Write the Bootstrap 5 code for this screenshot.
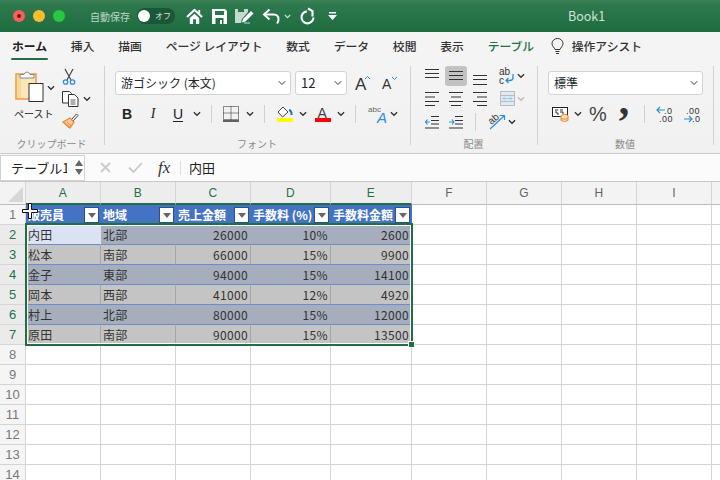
<!DOCTYPE html>
<html lang="ja">
<head>
<meta charset="utf-8">
<title>Book1</title>
<link href="https://cdn.jsdelivr.net/npm/bootstrap@5.3.0/dist/css/bootstrap.min.css" rel="stylesheet">
<style>
html,body{margin:0;height:480px;overflow:hidden;background:#fff}
body,select{font-family:"Noto Sans CJK JP","Liberation Sans",sans-serif;color:#222}
svg{display:block;flex:none;overflow:visible}
.ttl{height:32px;background:linear-gradient(#3d8259,#2e7a4e 12%,#1f6c41);color:#fff}
.dot{width:12px;height:12px;border-radius:50%;margin-right:8px}
.dot-r{margin-left:13px;background:#fc5f57}
.dot-r::after{content:"";display:block;width:4px;height:4px;margin:4px;border-radius:50%;background:#7a1410}
.dot-y{background:#fdbc2e}
.dot-g{background:#28c840;margin-right:25px}
.auto{font-size:10px;color:#bcd8c7;width:47px}
.tog{width:38px;height:16px;border-radius:8px;background:#1c5537;padding-left:1px;margin-right:11px}
.tog i{display:block;width:12px;height:12px;border-radius:50%;background:#fff}
.tog span{font-size:8px;color:#d5e5db;margin-left:5px;line-height:1}
.i-save{margin:0 8px 0 9px}.i-edit{margin-right:8px}.i-chv{margin:0 8px 0 3px}.i-redo{margin-right:12px}
.book{margin-left:231px;font-size:12.500px;color:#cfe2d7}
.tabs{height:28px;background:#f4f4f4;gap:23.800px;padding-left:12px;font-size:11.800px;font-weight:500;color:#333}
.tabs>span{line-height:28px;height:28px;position:relative;white-space:nowrap}
.tab-on{font-weight:700;color:#222}
.tab-on::after{content:"";position:absolute;left:-1px;right:-1px;bottom:0;height:2px;background:#1f6f43;border-radius:1px}
.tab-t{color:#217346}
.bulb{margin:0 -16px 0 -7px}
.rib{height:94px;background:linear-gradient(#f4f4f4,#f1f1f1);border-bottom:1px solid #c9c9c9;padding-top:6px;align-items:flex-start}
.grp{height:79px;border-right:1px solid #d2d2d2;padding-top:5px}
.g1{width:105px}.g2{width:306px;padding-left:10px}.g3{width:127px}.g4{width:176px;padding-left:10px}
.glab{margin-top:auto;margin-bottom:-5px;margin-left:-1px;text-align:center;font-size:10px;line-height:12px;color:#8a8a8a}
.g2 .glab{margin-left:-11px}.g4 .glab{margin-left:-11px}
.paste{margin-left:14px;width:46px}
.paste-lab{font-size:10px;line-height:14px;margin-top:5px;white-space:nowrap}
.chv-up{margin:14px 0 0 3px}
.clip-r{margin:-2px 0 0 2px;gap:6px}
.sel-f{height:24px;padding:0 18px 0 5px;font-size:12px;border:1px solid #d3d3d3;border-radius:3px;background-position:right 4px center;background-size:8px 8px;line-height:22px;box-shadow:none}
.sf1{width:176px;margin-right:4px}.sf2{width:52px;margin-right:8px;font-size:13px}.sf4{width:155px}
.bigA{width:15px;margin-right:12px}
.r2{display:grid;align-items:center;justify-items:center;height:24px;margin-top:7px}
.r2f{grid-template-columns:24px 28px 22px 16px 12px 28px 10px 18px 24px 12px 28px 8px 20px 26px 6px}
.r2n{grid-template-columns:24px 12px 28px 24px 16px 24px 30px}
.vs{width:1px;height:18px;background:#cfcfcf}
.bb{font:700 14px "Liberation Sans",sans-serif}
.bi{font:italic 14px "Liberation Serif",serif}
.bu{font:14px "Liberation Sans",sans-serif;text-decoration:underline;text-underline-offset:2px}
.pct{font:20px "Liberation Sans",sans-serif;color:#444;line-height:24px}
.cma{font:700 42px/24px "Liberation Serif",serif;color:#333;height:24px;margin-top:-28px}
.g3{padding-top:0}
.ar{display:grid;align-items:center;justify-items:center;height:23px;margin-top:-2px}
.ar+.ar{margin-top:0}
.ar1,.ar2{grid-template-columns:16px 32px 16px 10px 18px 10px;margin-left:13px}
.ar3{grid-template-columns:16px 32px 6px 9px 19px 12px;margin-left:13px;margin-top:0}
.ar-on{width:22px;height:20px;background:#c2c2c2;border-radius:3px}
.ar-on svg{margin:0 auto}
.blank{width:1px;height:1px}
.fbar{height:28px;background:#fbfbfb;border-bottom:1px solid #c8c8c8}
.nbox{width:85px;height:26px;background:#fff;border:1px solid #d2d2d2;font-size:13px;padding-left:10px;line-height:24px;margin-right:15px}
.nbox span{width:56px;overflow:hidden;white-space:nowrap}
.nbox svg{margin-left:8px}
.fx{font:italic 17px "Liberation Serif",serif;color:#333;width:18px;margin-left:15px;line-height:1}
.fx-sep{width:1px;height:14px;background:#ddd;margin:0 8px 0 4px}
.fval{font-size:13px}
.f-x{margin-right:17px}
.sheet{height:298px;overflow:hidden;background:#fff}
.xl{table-layout:fixed;width:720px;border-collapse:separate;border-spacing:0;font-size:12px;line-height:19px;letter-spacing:.35px;color:#333}
.xl td,.xl th{padding:0 2px;border-right:1px solid #d5d5d5;border-bottom:1px solid #d5d5d5;white-space:nowrap;overflow:hidden;font-weight:400;height:20px}
.c0{width:26px}.cw{width:75px}.cd{width:80px}.ce{width:81px}.cz{width:9px}
.xl thead th{height:23px;background:#f3f3f3;text-align:center;font:12px "Liberation Sans",sans-serif;color:#666;border-color:#d5d5d5;border-bottom-color:#bdbdbd}
.xl thead th.on{background:#ededed;color:#217346;border-bottom:2px solid #1f6f43}
.xl thead th.corner{position:relative;padding:0}
.tri{position:absolute;right:2px;bottom:2px;width:0;height:0;border-style:solid;border-width:0 0 15px 15px;border-color:transparent transparent #d6d6d6 transparent}
.xl tbody th{background:#f5f5f5;text-align:center;padding:0;font:13px "Liberation Sans",sans-serif;color:#777;letter-spacing:0}
.xl tbody th.on{background:#ebebeb;color:#217346}
.xl td.hc{background:#4472c4;color:#fff;font-weight:700;border-right-color:#4472c4;border-bottom-color:#fff;padding:0 1px 0 2px;letter-spacing:0}
.hc>div{height:19px}
.fl{width:15px;height:16px;background:#fff;border:1px solid #2f4f86;flex:none;margin-left:auto}
.fl::after{content:"";display:block;width:0;height:0;margin:5px auto 0;border-style:solid;border-width:5px 4px 0 4px;border-color:#666 transparent transparent transparent}
.b1 td.d{background:#a6adbd;border-right-color:#a6adbd;border-bottom-color:#6d8cc8}
.b2 td.d{background:#c4c4c4;border-right-color:#a5a5a5;border-bottom-color:#6d8cc8}
.b1 td.act{background:#dbe3f3;border-right-color:#dbe3f3}
.xl td.num{text-align:right}
.sel-box{position:absolute;left:25px;top:41px;width:388px;height:123px;border:2px solid #1f6f43;box-shadow:inset 0 0 0 1px #fff;pointer-events:none}
.sel-h{position:absolute;left:408px;top:159px;width:7px;height:7px;background:#1f6f43;border:1px solid #fff}
.crs{position:absolute;left:22px;top:21px}
</style>
</head>
<body>
<svg width="0" height="0" class="position-absolute">
<symbol id="chev" viewBox="0 0 9 6"><path d="M1 1l3.500 3.500L8 1" fill="none" stroke="#333" stroke-width="1.500"/></symbol>
<symbol id="chevp" viewBox="0 0 9 6"><path d="M1 1l3.500 3.500L8 1" fill="none" stroke="#bbb" stroke-width="1.500"/></symbol>
<symbol id="chevw" viewBox="0 0 9 6"><path d="M1 1l3.500 3.500L8 1" fill="none" stroke="#d5e5db" stroke-width="1.500"/></symbol>
</svg>

<div class="ttl d-flex align-items-center">
  <div class="dot dot-r"></div><div class="dot dot-y"></div><div class="dot dot-g"></div>
  <div class="auto text-nowrap">自動保存</div>
  <div class="tog d-flex align-items-center"><i></i><span>オフ</span></div>
  <svg width="17" height="17" viewBox="0 0 18 18" fill="#fff"><path d="M1 9.500L9 2l8 7.500" fill="none" stroke="#fff" stroke-width="2.200"/><path d="M4 10.500L9 6l5 4.500V17h-3.500v-5h-3v5H4z"/><path d="M13 2h2v4h-2z"/></svg>
  <svg class="i-save" width="15" height="15" viewBox="0 0 15 15"><path fill="#fff" fill-rule="evenodd" d="M0 0h13l2 2v13H0zM3 2v4h9V2zM3.500 9v6h8V9z"/><path fill="#fff" d="M8 11h2v4H8z"/></svg>
  <svg class="i-edit" width="19" height="16" viewBox="0 0 19 16"><path fill="#c3dacc" d="M0 1h13v3L7 11l-1 4H0z"/><path fill="#2a7549" d="M3 1h6v3H3z"/><path fill="#fff" d="M8 11l8-8 2.500 2.500-8 8-3.500 1z"/><path fill="#fff" stroke="#c3dacc" d="M9 15h6"/></svg>
  <svg width="19" height="17" viewBox="0 0 19 17" fill="none" stroke="#fff" stroke-width="2"><path d="M7.500 1.500L2 6.500l5.500 5"/><path d="M2 6.500h10a4.500 4.500 0 0 1 4.500 4.500v.5q0 2-1.500 4"/></svg>
  <svg class="i-chv" width="7" height="5"><use href="#chevw" width="7" height="5"/></svg>
  <svg class="i-redo" width="17" height="17" viewBox="0 0 17 17" fill="none" stroke="#fff" stroke-width="2.100"><path d="M7.800 3.400A6 6 0 1 0 14.500 9.500"/><path d="M9 .5l4.500 2.500v5.500"/></svg>
  <svg width="9" height="8" viewBox="0 0 9 8" fill="#fff"><path d="M1 0h7v1.500H1zM0 3h9L4.500 8z"/></svg>
  <div class="book">Book1</div>
</div>

<div class="tabs d-flex">
  <span class="tab-on">ホーム</span><span>挿入</span><span>描画</span><span>ページ レイアウト</span><span>数式</span><span>データ</span><span>校閲</span><span>表示</span><span class="tab-t">テーブル</span>
  <svg class="bulb align-self-center" width="13" height="17" viewBox="0 0 13 17" fill="none" stroke="#333"><path d="M4 11.500C3.500 9.500 1 8.500 1 5.500a5.500 5 0 0 1 11 0c0 3-2.500 4-3 6z"/><path d="M4.500 13.500h4M5 15.500h3"/></svg>
  <span>操作アシスト</span>
</div>

<div class="rib d-flex">
  <div class="grp g1 d-flex flex-column">
    <div class="d-flex">
      <div class="paste">
        <div class="d-flex">
          <svg width="30" height="31" viewBox="0 0 30 31"><rect x="2" y="3" width="20" height="25" fill="#fbe6b8" stroke="#e8953c" stroke-width="1.400"/><path d="M3 4h4v23H3z" fill="#f9d998"/><path d="M6 7V3.500h4Q11 1 13 1t3 2.500h4V7z" fill="#fff" stroke="#888"/><rect x="15" y="12.500" width="14" height="18" fill="#fff" stroke="#333"/></svg>
          <svg class="chv-up" width="8" height="6"><use href="#chev" width="8" height="6"/></svg>
        </div>
        <div class="paste-lab">ペースト</div>
      </div>
      <div class="clip-r d-flex flex-column">
        <svg width="14" height="16" viewBox="0 0 14 16" fill="none"><path d="M3 0l6 11M11 0L5 11" stroke="#444" stroke-width="1.200"/><circle cx="3.500" cy="13" r="2.200" stroke="#2d8fd8" stroke-width="1.300"/><circle cx="10.500" cy="13" r="2.200" stroke="#2d8fd8" stroke-width="1.300"/></svg>
        <div class="d-flex align-items-center">
          <svg width="17" height="16" viewBox="0 0 17 16" fill="#fff" stroke="#333"><path d="M.5 .5h7l2 2V12H.5z"/><path d="M6.500 3.500h6l3.500 3.500v8.500H6.500z"/><path d="M8.500 9h5M8.500 11h5M8.500 13h5" stroke-width=".8"/></svg>
          <svg class="ms-1" width="8" height="6"><use href="#chev" width="8" height="6"/></svg>
        </div>
        <svg width="17" height="16" viewBox="0 0 17 16"><path d="M9.500 6.500L14.500 1 16 2.500 11 8z" fill="#fff" stroke="#444"/><path d="M1 9l7-4 4 4-4 6z" fill="#f9c89a" stroke="#ea8a35" stroke-width="1.300"/><path d="M3 11l4 4M5 9l4 4" stroke="#ea8a35"/></svg>
      </div>
    </div>
    <div class="glab">クリップボード</div>
  </div>

  <div class="grp g2 d-flex flex-column">
    <div class="d-flex align-items-center">
      <select class="form-select sel-f sf1"><option>游ゴシック (本文)</option></select>
      <select class="form-select sel-f sf2"><option>12</option></select>
      <svg class="bigA" width="15" height="17" viewBox="0 0 15 17"><text x="0" y="15" font-family="Liberation Sans" font-size="17" fill="#333">A</text><path d="M10 4l2.500-2.500L15 4" fill="none" stroke="#2d8fd8"/></svg>
      <svg width="16" height="14" viewBox="0 0 16 14"><text x="0" y="13" font-family="Liberation Sans" font-size="14" fill="#333">A</text><path d="M10 1l2.500 2.500L15 1" fill="none" stroke="#2d8fd8"/></svg>
    </div>
    <div class="r2 r2f">
      <span class="bb">B</span><span class="bi">I</span><span class="bu">U</span>
      <svg width="8" height="6"><use href="#chev" width="8" height="6"/></svg>
      <div class="vs"></div>
      <svg width="16" height="16" viewBox="0 0 16 16"><path d="M.5 .5h15v13H.5zM8 .5v13M.5 7h15" fill="none" stroke="#222" stroke-dasharray="1 1"/><path d="M0 15h16" stroke="#111" stroke-width="1.300"/></svg>
      <svg width="8" height="6"><use href="#chev" width="8" height="6"/></svg>
      <div class="vs"></div>
      <svg width="16" height="16" viewBox="0 0 16 16"><path d="M6 1L1 6l4.500 5L11 6z" fill="#fff" stroke="#444"/><path d="M12 4q3 1 2.500 5" fill="none" stroke="#1e6fc4" stroke-width="2"/><path d="M0 12h16v4H0z" fill="#ff0"/></svg>
      <svg width="8" height="6"><use href="#chev" width="8" height="6"/></svg>
      <svg width="16" height="16" viewBox="0 0 16 16"><text x="2.500" y="11.500" font-family="Liberation Sans" font-size="14" fill="#444">A</text><path d="M0 12h16v4H0z" fill="#f00"/></svg>
      <svg width="8" height="6"><use href="#chev" width="8" height="6"/></svg>
      <div class="vs"></div>
      <svg width="21" height="19" viewBox="0 0 21 19"><text x="0" y="7" font-family="Liberation Sans" font-size="8" fill="#666">abc</text><text x="9" y="18" font-family="Liberation Sans" font-style="italic" font-size="15" fill="#2d8fd8">A</text></svg>
      <svg width="8" height="6"><use href="#chev" width="8" height="6"/></svg>
    </div>
    <div class="glab">フォント</div>
  </div>

  <div class="grp g3 d-flex flex-column">
    <div class="ar ar1">
      <svg width="14" height="20" viewBox="0 0 14 20" stroke="#333"><path d="M0 3.500h14M0 7.500h14M0 11.500h14"/></svg>
      <div class="ar-on"><svg width="14" height="20" viewBox="0 0 14 20" stroke="#333"><path d="M0 5.500h14M0 9.500h14M0 13.500h14"/></svg></div>
      <svg width="14" height="20" viewBox="0 0 14 20" stroke="#333"><path d="M0 9.500h14M0 13.500h14M0 18.500h14"/></svg>
      <span class="blank"></span>
      <svg width="18" height="18" viewBox="0 0 18 18"><text x="1" y="8" font-family="Liberation Sans" font-size="10" fill="#333">ab</text><text x="1" y="17" font-family="Liberation Sans" font-size="10" fill="#333">c</text><path d="M15 7v3.500a3 3 0 0 1-3 3H8M10.500 11L8 13.500l2.500 2.500" fill="none" stroke="#2d8fd8" stroke-width="1.300"/></svg>
      <svg width="8" height="6"><use href="#chev" width="8" height="6"/></svg>
    </div>
    <div class="ar ar2">
      <svg width="14" height="16" viewBox="0 0 14 16" stroke="#333"><path d="M0 1.500h14M0 6h10M0 10.500h14M0 14.500h10"/></svg>
      <svg width="14" height="16" viewBox="0 0 14 16" stroke="#333"><path d="M0 1.500h14M2 6h10M0 10.500h14M2 14.500h10"/></svg>
      <svg width="14" height="16" viewBox="0 0 14 16" stroke="#333"><path d="M0 1.500h14M4 6h10M0 10.500h14M4 14.500h10"/></svg>
      <span class="blank"></span>
      <svg width="15" height="15" viewBox="0 0 15 15"><rect x=".5" y=".5" width="14" height="14" fill="#dcecf7" stroke="#bbb"/><path d="M.5 4.500h14M.5 10.500h14" stroke="#bbb"/><path d="M3 7.500h9M5 5.500l-2 2 2 2M10 5.500l2 2-2 2" fill="none" stroke="#9cc9e8"/></svg>
      <svg width="8" height="6"><use href="#chevp" width="8" height="6"/></svg>
    </div>
    <div class="ar ar3">
      <svg width="14" height="14" viewBox="0 0 14 14" stroke="#333" fill="none"><path d="M6 1.500h8M6 5.500h8M6 9h8M0 13h14"/><path d="M5 7H0M2.500 4.500L.5 7l2 2.500" stroke="#2d8fd8" stroke-width="1.200"/></svg>
      <svg width="14" height="14" viewBox="0 0 14 14" stroke="#333" fill="none"><path d="M6 1.500h8M6 5.500h8M6 9h8M0 13h14"/><path d="M0 7h5M3 4.500l2 2.500-2 2.500" stroke="#2d8fd8" stroke-width="1.200"/></svg>
      <div class="vs"></div>
      <span></span>
      <svg width="19" height="17" viewBox="0 0 19 17"><text x="2" y="10" transform="rotate(-40 6 8)" font-family="Liberation Sans" font-size="10" fill="#333">ab</text><path d="M3 16L17 3M12.500 2.500H17.500V7" fill="none" stroke="#2d8fd8" stroke-width="1.200"/></svg>
      <svg width="8" height="6"><use href="#chev" width="8" height="6"/></svg>
    </div>
    <div class="glab">配置</div>
  </div>

  <div class="grp g4 d-flex flex-column">
    <select class="form-select sel-f sf4"><option>標準</option></select>
    <div class="r2 r2n">
      <svg width="17" height="15" viewBox="0 0 17 15"><rect x=".5" y=".5" width="15" height="9" fill="#fff" stroke="#222"/><path d="M3 3h3M3 5h2v2h2M8 3h3M8 5h3v2" stroke="#333" fill="none"/><ellipse cx="12.500" cy="9" rx="3.500" ry="1.500" fill="#fde1b8" stroke="#ea8a35"/><path d="M9 9v4.500q3.500 2 7 0V9" fill="#fde1b8" stroke="#ea8a35"/><path d="M9 11.500q3.500 1.500 7 0" fill="none" stroke="#ea8a35"/></svg>
      <svg width="8" height="6"><use href="#chev" width="8" height="6"/></svg>
      <span class="pct">%</span>
      <span class="cma">,</span>
      <div class="vs"></div>
      <svg width="17" height="17" viewBox="0 0 17 17"><text x="8" y="7.500" font-family="Liberation Sans" font-size="9" fill="#333" letter-spacing=".5">.0</text><text x="3" y="16" font-family="Liberation Sans" font-size="9" fill="#333" letter-spacing=".5">.00</text><path d="M9 4H1M4 1L1 4l3 3" fill="none" stroke="#2d8fd8" stroke-width="1.200"/></svg>
      <svg width="17" height="17" viewBox="0 0 17 17"><text x="3" y="7.500" font-family="Liberation Sans" font-size="9" fill="#333" letter-spacing=".5">.00</text><text x="9" y="16" font-family="Liberation Sans" font-size="9" fill="#333" letter-spacing=".5">.0</text><path d="M1 13h8M6 10l3 3-3 3" fill="none" stroke="#2d8fd8" stroke-width="1.200"/></svg>
    </div>
    <div class="glab">数値</div>
  </div>
</div>

<div class="fbar d-flex align-items-center">
  <div class="nbox d-flex align-items-center"><span>テーブル1</span>
    <svg width="8" height="15" viewBox="0 0 8 15" fill="#666"><path d="M4 0l4 6H0zM0 9h8l-4 6z"/></svg></div>
  <svg class="f-x" width="11" height="11" viewBox="0 0 11 11" stroke="#c9c9c9" stroke-width="1.800"><path d="M1 1l9 9M10 1l-9 9"/></svg>
  <svg width="15" height="11" viewBox="0 0 15 11" fill="none" stroke="#c9c9c9" stroke-width="1.800"><path d="M1 5.500L5.500 10 14 1"/></svg>
  <div class="fx">fx</div>
  <div class="fx-sep"></div>
  <div class="fval">内田</div>
</div>

<div class="sheet position-relative">
  <table class="xl">
    <colgroup><col class="c0"><col class="cw"><col class="cw"><col class="cw"><col class="cd"><col class="ce"><col class="cw"><col class="cw"><col class="cw"><col class="cw"><col class="cz"></colgroup>
    <thead><tr><th class="corner"><div class="tri"></div></th><th class="on">A</th><th class="on">B</th><th class="on">C</th><th class="on">D</th><th class="on">E</th><th>F</th><th>G</th><th>H</th><th>I</th><th></th></tr></thead>
    <tbody>
      <tr><th>1</th><td class="hc"><div class="d-flex align-items-center"><span>販売員</span><i class="fl"></i></div></td><td class="hc"><div class="d-flex align-items-center"><span>地域</span><i class="fl"></i></div></td><td class="hc"><div class="d-flex align-items-center"><span>売上金額</span><i class="fl"></i></div></td><td class="hc"><div class="d-flex align-items-center"><span>手数料 (%)</span><i class="fl"></i></div></td><td class="hc"><div class="d-flex align-items-center"><span>手数料金額</span><i class="fl"></i></div></td><td></td><td></td><td></td><td></td><td></td></tr>
      <tr class="b1"><th class="on">2</th><td class="d act">内田</td><td class="d">北部</td><td class="d num">26000</td><td class="d num">10%</td><td class="d num">2600</td><td></td><td></td><td></td><td></td><td></td></tr>
      <tr class="b2"><th class="on">3</th><td class="d">松本</td><td class="d">南部</td><td class="d num">66000</td><td class="d num">15%</td><td class="d num">9900</td><td></td><td></td><td></td><td></td><td></td></tr>
      <tr class="b1"><th class="on">4</th><td class="d">金子</td><td class="d">東部</td><td class="d num">94000</td><td class="d num">15%</td><td class="d num">14100</td><td></td><td></td><td></td><td></td><td></td></tr>
      <tr class="b2"><th class="on">5</th><td class="d">岡本</td><td class="d">西部</td><td class="d num">41000</td><td class="d num">12%</td><td class="d num">4920</td><td></td><td></td><td></td><td></td><td></td></tr>
      <tr class="b1"><th class="on">6</th><td class="d">村上</td><td class="d">北部</td><td class="d num">80000</td><td class="d num">15%</td><td class="d num">12000</td><td></td><td></td><td></td><td></td><td></td></tr>
      <tr class="b2"><th class="on">7</th><td class="d">原田</td><td class="d">南部</td><td class="d num">90000</td><td class="d num">15%</td><td class="d num">13500</td><td></td><td></td><td></td><td></td><td></td></tr>
      <tr><th>8</th><td></td><td></td><td></td><td></td><td></td><td></td><td></td><td></td><td></td><td></td></tr>
      <tr><th>9</th><td></td><td></td><td></td><td></td><td></td><td></td><td></td><td></td><td></td><td></td></tr>
      <tr><th>10</th><td></td><td></td><td></td><td></td><td></td><td></td><td></td><td></td><td></td><td></td></tr>
      <tr><th>11</th><td></td><td></td><td></td><td></td><td></td><td></td><td></td><td></td><td></td><td></td></tr>
      <tr><th>12</th><td></td><td></td><td></td><td></td><td></td><td></td><td></td><td></td><td></td><td></td></tr>
      <tr><th>13</th><td></td><td></td><td></td><td></td><td></td><td></td><td></td><td></td><td></td><td></td></tr>
      <tr><th>14</th><td></td><td></td><td></td><td></td><td></td><td></td><td></td><td></td><td></td><td></td></tr>
    </tbody>
  </table>
  <div class="sel-box"></div>
  <div class="sel-h"></div>
  <svg class="crs" width="16" height="16" viewBox="0 0 16 16"><path d="M6.500 .5h3v6h6v3h-6v6h-3v-6h-6v-3h6z" fill="#fff" stroke="#111"/></svg>
</div>
<script src="https://cdn.jsdelivr.net/npm/bootstrap@5.3.0/dist/js/bootstrap.bundle.min.js"></script>
</body>
</html>
